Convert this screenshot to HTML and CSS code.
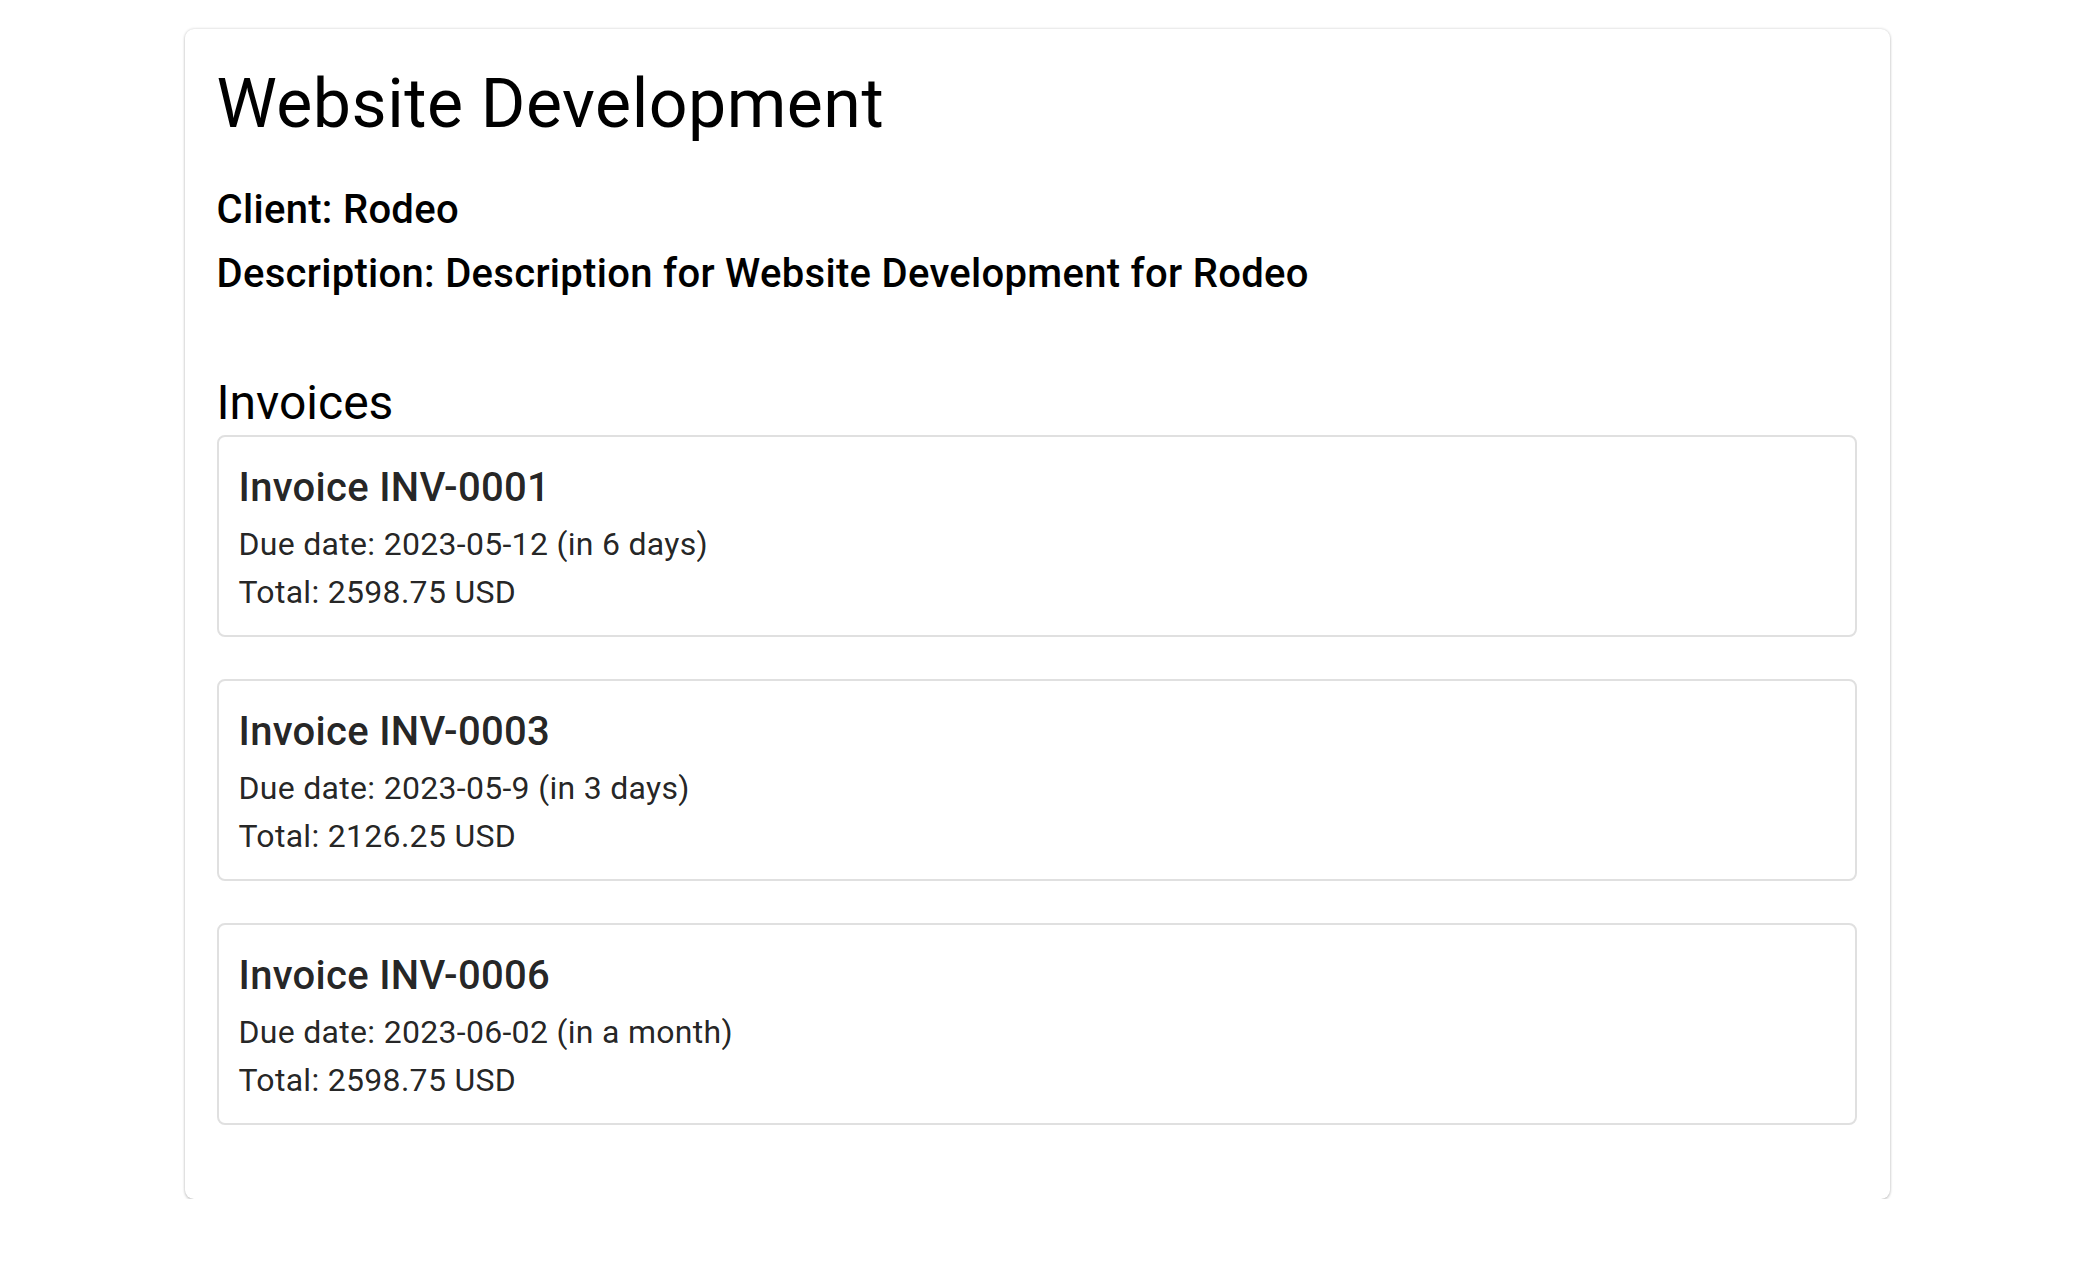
FILE: index.html
```html
<!DOCTYPE html>
<html lang="en">
<head>
<meta charset="utf-8">
<title>Website Development</title>
<link rel="stylesheet" href="styles.css">
</head>
<body>
<main class="page">
  <section class="project-card">
    <h1 class="project-title">Website Development</h1>
    <p class="project-meta">Client: Rodeo</p>
    <p class="project-meta">Description: Description for Website Development for Rodeo</p>
    <h2 class="section-title">Invoices</h2>
    <div class="invoice-list">
      <article class="invoice-card">
        <h3 class="invoice-title">Invoice INV-0001</h3>
        <p class="invoice-line">Due date: 2023-05-12 (in 6 days)</p>
        <p class="invoice-line">Total: 2598.75 USD</p>
      </article>
      <article class="invoice-card">
        <h3 class="invoice-title">Invoice INV-0003</h3>
        <p class="invoice-line">Due date: 2023-05-9 (in 3 days)</p>
        <p class="invoice-line">Total: 2126.25 USD</p>
      </article>
      <article class="invoice-card">
        <h3 class="invoice-title">Invoice INV-0006</h3>
        <p class="invoice-line">Due date: 2023-06-02 (in a month)</p>
        <p class="invoice-line">Total: 2598.75 USD</p>
      </article>
    </div>
  </section>
</main>
</body>
</html>
```

FILE: styles.css
```css
html, body {
  margin: 0;
  padding: 0;
  background: #ffffff;
}

body {
  font-family: Roboto, "Liberation Sans", Arial, sans-serif;
  color: #000;
}

.page {
  padding-top: 29px;
}

.project-card {
  width: 1705px;
  margin: 0 auto;
  box-sizing: border-box;
  padding: 33px 33px 32px 32px;
  background: #fff;
  border-radius: 9px;
  box-shadow: 0 0 3px 0 rgba(0,0,0,0.2), 0 2px 3px 0 rgba(0,0,0,0.14);
}

.project-title {
  margin: 0 0 32px;
  font-size: 68px;
  font-weight: 400;
  line-height: 84px;
  letter-spacing: 0.00735em;
  color: #000;
}

.project-meta {
  margin: 0;
  font-size: 40px;
  font-weight: 500;
  line-height: 64px;
  letter-spacing: 0.0075em;
  color: #000;
}

.section-title {
  margin: 65px 0 0;
  font-size: 48px;
  font-weight: 400;
  line-height: 64px;
  color: #000;
}

.invoice-list {
  display: flex;
  flex-direction: column;
  gap: 42px;
  padding-bottom: 42px;
}

.invoice-card {
  border: 2px solid #e0e0e0;
  border-radius: 8px;
  padding: 19px 20px;
  color: rgba(0,0,0,0.87);
}

.invoice-title {
  margin: 0;
  font-size: 40px;
  font-weight: 500;
  line-height: 64px;
  letter-spacing: 0.0075em;
}

.invoice-line {
  margin: 0;
  font-size: 32px;
  font-weight: 400;
  line-height: 48px;
  letter-spacing: 0.00938em;
}
```
